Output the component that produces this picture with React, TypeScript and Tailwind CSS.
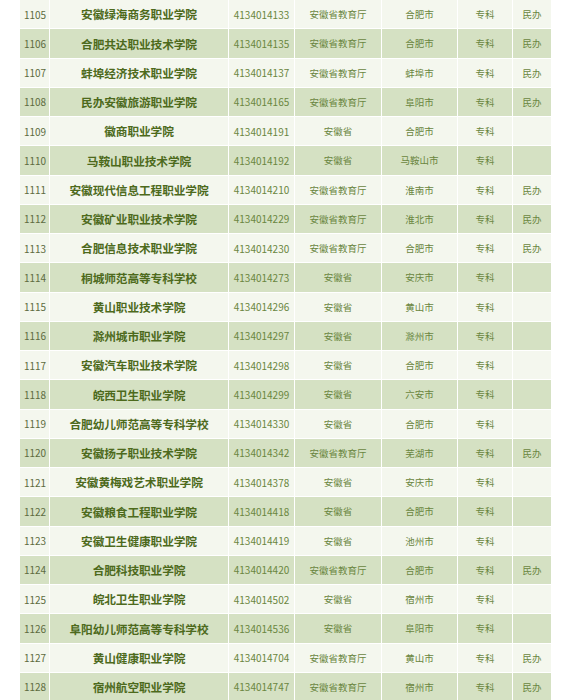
import React from "react";

type Row = [string, string, string, string, string, string, string];

const rows: Row[] = [
  ["1105", "安徽绿海商务职业学院", "4134014133", "安徽省教育厅", "合肥市", "专科", "民办"],
  ["1106", "合肥共达职业技术学院", "4134014135", "安徽省教育厅", "合肥市", "专科", "民办"],
  ["1107", "蚌埠经济技术职业学院", "4134014137", "安徽省教育厅", "蚌埠市", "专科", "民办"],
  ["1108", "民办安徽旅游职业学院", "4134014165", "安徽省教育厅", "阜阳市", "专科", "民办"],
  ["1109", "徽商职业学院", "4134014191", "安徽省", "合肥市", "专科", ""],
  ["1110", "马鞍山职业技术学院", "4134014192", "安徽省", "马鞍山市", "专科", ""],
  ["1111", "安徽现代信息工程职业学院", "4134014210", "安徽省教育厅", "淮南市", "专科", "民办"],
  ["1112", "安徽矿业职业技术学院", "4134014229", "安徽省教育厅", "淮北市", "专科", "民办"],
  ["1113", "合肥信息技术职业学院", "4134014230", "安徽省教育厅", "合肥市", "专科", "民办"],
  ["1114", "桐城师范高等专科学校", "4134014273", "安徽省", "安庆市", "专科", ""],
  ["1115", "黄山职业技术学院", "4134014296", "安徽省", "黄山市", "专科", ""],
  ["1116", "滁州城市职业学院", "4134014297", "安徽省", "滁州市", "专科", ""],
  ["1117", "安徽汽车职业技术学院", "4134014298", "安徽省", "合肥市", "专科", ""],
  ["1118", "皖西卫生职业学院", "4134014299", "安徽省", "六安市", "专科", ""],
  ["1119", "合肥幼儿师范高等专科学校", "4134014330", "安徽省", "合肥市", "专科", ""],
  ["1120", "安徽扬子职业技术学院", "4134014342", "安徽省教育厅", "芜湖市", "专科", "民办"],
  ["1121", "安徽黄梅戏艺术职业学院", "4134014378", "安徽省", "安庆市", "专科", ""],
  ["1122", "安徽粮食工程职业学院", "4134014418", "安徽省", "合肥市", "专科", ""],
  ["1123", "安徽卫生健康职业学院", "4134014419", "安徽省", "池州市", "专科", ""],
  ["1124", "合肥科技职业学院", "4134014420", "安徽省教育厅", "合肥市", "专科", "民办"],
  ["1125", "皖北卫生职业学院", "4134014502", "安徽省", "宿州市", "专科", ""],
  ["1126", "阜阳幼儿师范高等专科学校", "4134014536", "安徽省", "阜阳市", "专科", ""],
  ["1127", "黄山健康职业学院", "4134014704", "安徽省教育厅", "黄山市", "专科", "民办"],
  ["1128", "宿州航空职业学院", "4134014747", "安徽省教育厅", "宿州市", "专科", "民办"],
];

export default function App() {
  return (
    <div
      className="w-[568px] h-[700px] overflow-hidden bg-white pl-[20px]"
      style={{ fontFamily: '"Noto Sans CJK SC", "Noto Sans", sans-serif' }}
    >
      <div className="w-[531px] flex flex-col">
        {rows.map((r, i) => (
          <div
            key={r[0]}
            className={`grid grid-cols-[29px_179px_66px_87px_76px_55px_39px] h-[29.25px] border-b border-white ${
              i % 2 === 0 ? "bg-[#f4f7ee]" : "bg-[#d5e1c3]"
            }`}
          >
            <div className="flex items-center justify-center text-[10px] text-[#5d6b40] pl-[1px]">
              {r[0]}
            </div>
            <div className="flex items-center justify-center border-l border-white text-[11.7px] font-bold text-[#4d6a1c] tracking-[-0.1px]">
              {r[1]}
            </div>
            <div className="flex items-center justify-center border-l border-white text-[10px] text-[#6a8640]">
              {r[2]}
            </div>
            <div className="flex items-center justify-center border-l border-white text-[9.5px] text-[#6a8640]">
              {r[3]}
            </div>
            <div className="flex items-center justify-center border-l border-white text-[9.5px] text-[#6a8640]">
              {r[4]}
            </div>
            <div className="flex items-center justify-center border-l border-white text-[9.5px] text-[#6a8640]">
              {r[5]}
            </div>
            <div className="flex items-center justify-center border-l border-white text-[9.5px] text-[#6a8640]">
              {r[6]}
            </div>
          </div>
        ))}
      </div>
    </div>
  );
}
